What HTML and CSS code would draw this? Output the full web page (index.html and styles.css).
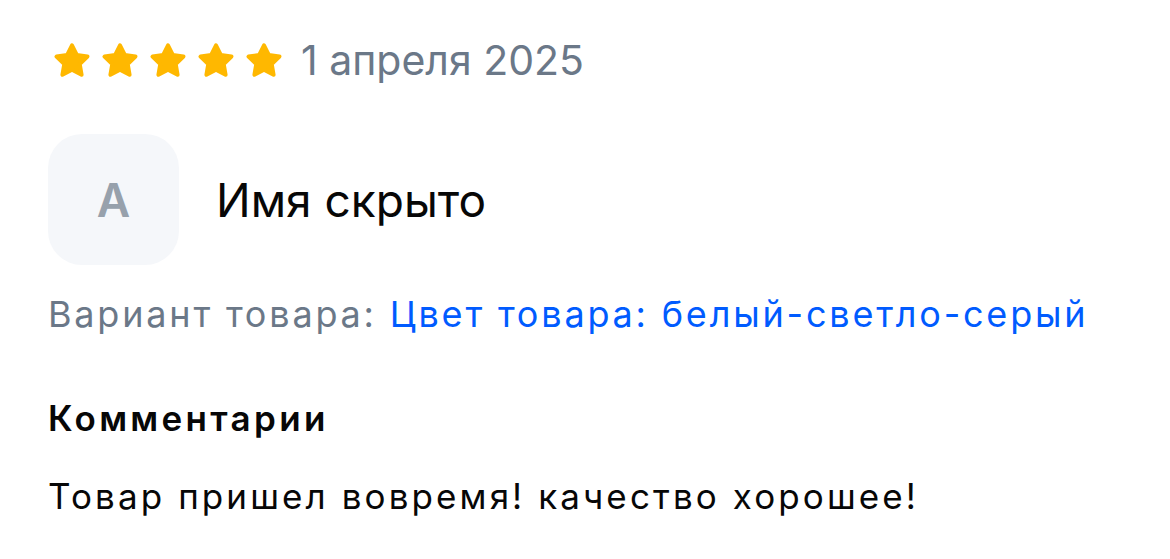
FILE: index.html
```html
<!DOCTYPE html>
<html lang="ru">
<head>
<meta charset="utf-8">
<title>Отзыв</title>
<link rel="stylesheet" href="styles.css">
</head>
<body>
<article class="review">
  <div class="rating-row">
    <div class="stars">
      <svg class="star" viewBox="0.5 0.5 23 22"><path d="M12 2l3.09 6.26L22 9.27l-5 4.87 1.18 6.88L12 17.77l-6.18 3.25L7 14.14 2 9.27l6.91-1.01L12 2z"/></svg>
      <svg class="star" viewBox="0.5 0.5 23 22"><path d="M12 2l3.09 6.26L22 9.27l-5 4.87 1.18 6.88L12 17.77l-6.18 3.25L7 14.14 2 9.27l6.91-1.01L12 2z"/></svg>
      <svg class="star" viewBox="0.5 0.5 23 22"><path d="M12 2l3.09 6.26L22 9.27l-5 4.87 1.18 6.88L12 17.77l-6.18 3.25L7 14.14 2 9.27l6.91-1.01L12 2z"/></svg>
      <svg class="star" viewBox="0.5 0.5 23 22"><path d="M12 2l3.09 6.26L22 9.27l-5 4.87 1.18 6.88L12 17.77l-6.18 3.25L7 14.14 2 9.27l6.91-1.01L12 2z"/></svg>
      <svg class="star" viewBox="0.5 0.5 23 22"><path d="M12 2l3.09 6.26L22 9.27l-5 4.87 1.18 6.88L12 17.77l-6.18 3.25L7 14.14 2 9.27l6.91-1.01L12 2z"/></svg>
    </div>
    <span class="date">1 апреля 2025</span>
  </div>
  <div class="author">
    <div class="avatar">А</div>
    <span class="name">Имя скрыто</span>
  </div>
  <p class="variant"><span class="variant-label">Вариант товара:</span> <a class="variant-value" href="#">Цвет товара: белый-светло-серый</a></p>
  <h3 class="comments-title">Комментарии</h3>
  <p class="comment">Товар пришел вовремя! качество хорошее!</p>
</article>
</body>
</html>
```
FILE: styles.css
```css
html, body {
  margin: 0;
  background: #ffffff;
}
body {
  font-family: Inter, "Noto Sans", sans-serif;
  color: #070707;
}
.review {
  padding: 38px 0 0 48px;
  display: flex;
  flex-direction: column;
}
.rating-row {
  display: flex;
  align-items: center;
  height: 44px;
}
.stars {
  display: flex;
  gap: 12px;
  padding-left: 6px;
}
.star {
  width: 36px;
  height: 34px;
  display: block;
}
.star path {
  fill: #FFB800;
  stroke: #FFB800;
  stroke-width: 2.6;
  stroke-linejoin: round;
}
.date {
  margin-left: 19px;
  font-size: 41px;
  line-height: 44px;
  color: #6B7888;
  letter-spacing: 0;
}
.author {
  display: flex;
  align-items: center;
  margin-top: 52px;
}
.avatar {
  width: 131px;
  height: 131px;
  border-radius: 34px;
  background: #F5F7FA;
  color: #97A1AC;
  font-weight: 600;
  font-size: 46px;
  display: flex;
  align-items: center;
  justify-content: center;
}
.name {
  margin-left: 37px;
  font-size: 46px;
  line-height: 56px;
  color: #070707;
}
.variant {
  margin: 27px 0 0;
  font-size: 36px;
  line-height: 44px;
  letter-spacing: 2.8px;
}
.variant-label {
  color: #6B7888;
}
.variant-value {
  color: #005BFF;
  text-decoration: none;
}
.comments-title {
  margin: 60px 0 0;
  font-size: 35px;
  line-height: 44px;
  font-weight: 600;
  letter-spacing: 3.3px;
  color: #070707;
}
.comment {
  margin: 34px 0 0;
  font-size: 35px;
  line-height: 44px;
  letter-spacing: 3.1px;
  color: #070707;
}
```
